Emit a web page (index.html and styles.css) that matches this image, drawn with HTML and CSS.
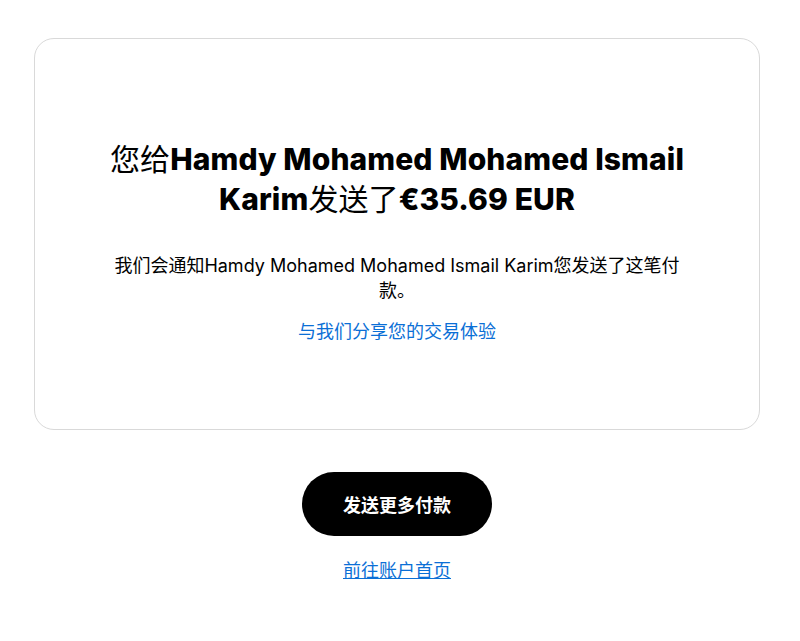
FILE: index.html
```html
<!DOCTYPE html>
<html lang="zh-CN">
<head>
  <meta charset="UTF-8">
  <meta name="viewport" content="width=device-width, initial-scale=1">
  <title>付款已发送</title>
  <link rel="stylesheet" href="styles.css">
</head>
<body>
  <div class="page">
    <div class="card">
      <h1 class="title">您给<b>Hamdy Mohamed Mohamed Ismail Karim</b>发送了<b>€35.69 EUR</b></h1>
      <p class="notice">我们会通知Hamdy Mohamed Mohamed Ismail Karim您发送了这笔付款。</p>
      <a class="share" href="#">与我们分享您的交易体验</a>
    </div>
    <div class="actions">
      <button class="primary">发送更多付款</button>
      <a class="home" href="#">前往账户首页</a>
    </div>
  </div>
</body>
</html>
```

FILE: styles.css
```css
body, html {
  margin: 0;
  padding: 0;
  background-color: #fff;
  color: #000;
  font-family: Inter, "Noto Sans CJK SC", sans-serif;
}
.page {
  padding: 38px 40px 0 34px;
}
/* Result card */
.card {
  border: 1px solid #d9d9d9;
  border-radius: 20px;
  height: 392px;
  box-sizing: border-box;
  padding: 100px 60px 0;
  text-align: center;
}
.title {
  margin: 0;
  font-size: 30px;
  line-height: 40px;
  font-weight: 400;
  letter-spacing: 0.1px;
}
.title b {
  font-weight: 800;
}
.notice {
  margin: 34px auto 0;
  max-width: 580px;
  font-size: 18px;
  line-height: 25px;
}
.share {
  display: inline-block;
  margin-top: 17px;
  font-size: 18px;
  line-height: 24px;
  color: #0b6fd6;
  text-decoration: none;
}
/* Buttons under the card */
.actions {
  display: flex;
  flex-direction: column;
  align-items: center;
  margin-top: 42px;
}
.primary {
  width: 190px;
  height: 64px;
  border: none;
  border-radius: 32px;
  background-color: #000;
  color: #fff;
  font-family: inherit;
  font-size: 18px;
  font-weight: 600;
}
.home {
  margin-top: 22px;
  font-size: 18px;
  line-height: 26px;
  color: #0b6fd6;
  text-decoration: underline;
}
```
